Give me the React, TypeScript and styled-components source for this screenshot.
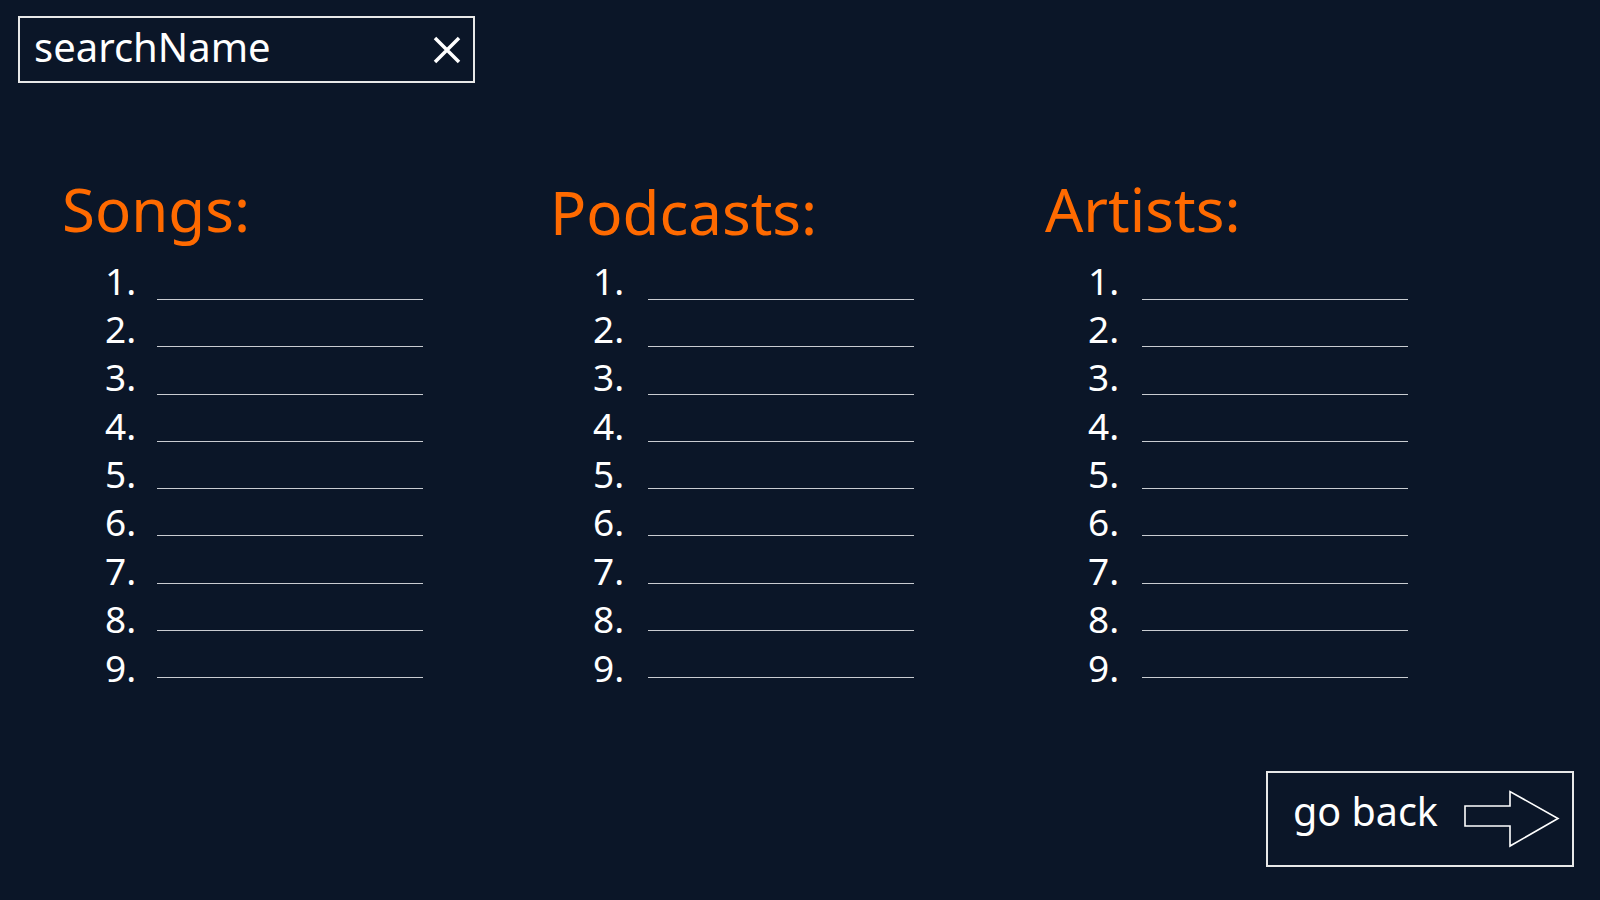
import React from "react";
import styled, { createGlobalStyle } from "styled-components";

const GlobalStyle = createGlobalStyle`
  html, body {
    margin: 0;
    padding: 0;
    background: #0b1628;
  }
  body {
    font-family: "Noto Sans", "Open Sans", sans-serif;
    color: #ffffff;
  }
  * { box-sizing: border-box; }
`;

const Page = styled.div`
  width: 1600px;
  height: 900px;
  display: flex;
  flex-direction: column;
  background: #0b1628;
  overflow: hidden;
`;

const Header = styled.header`
  display: flex;
  padding: 16px 0 0 18px;
`;

const SearchBox = styled.div`
  width: 457px;
  height: 67px;
  border: 2px solid #e8e8e8;
  display: flex;
  align-items: center;
  justify-content: space-between;
  padding: 0 12px 0 14px;
`;

const SearchText = styled.span`
  font-size: 40px;
  line-height: 1;
  color: #ffffff;
  margin-top: -5px;
`;

const ClearIcon = styled.svg`
  width: 28px;
  height: 28px;
  display: block;
`;

const Columns = styled.main`
  display: grid;
  grid-template-columns: 488px 495px 1fr;
  padding: 96px 0 0 62px;
`;

const Column = styled.section`
  display: flex;
  flex-direction: column;
`;

const Heading = styled.h2<{ $offset?: number }>`
  margin: 0 0 12px 0;
  font-size: 60px;
  line-height: 1;
  font-weight: 400;
  color: #ff6a00;
  position: relative;
  top: ${(p) => p.$offset ?? 0}px;
`;

const ListGrid = styled.div<{ $numWidth: number }>`
  display: grid;
  grid-template-columns: ${(p) => p.$numWidth}px 266px;
`;

const Numbers = styled.ol`
  list-style: none;
  margin: 0;
  padding: 5.5px 0 0 43px;
`;

const Num = styled.li`
  font-size: 37px;
  line-height: 48.4px;
  height: 48.4px;
  color: #ffffff;
`;

const Blanks = styled.div`
  display: flex;
  flex-direction: column;
  padding-top: 1.7px;
`;

const Blank = styled.div`
  height: 47.3px;
  border-bottom: 1px solid #c9ccd1;
`;

const Footer = styled.footer`
  margin-top: auto;
  display: flex;
  justify-content: flex-end;
  padding: 0 26px 33px 0;
`;

const BackButton = styled.button`
  width: 308px;
  height: 96px;
  border: 2px solid #e8e8e8;
  background: transparent;
  display: flex;
  align-items: center;
  padding: 0 12px 0 25px;
  font-family: "Noto Sans", "Open Sans", sans-serif;
  color: #ffffff;
  cursor: pointer;
`;

const BackLabel = styled.span`
  font-size: 39.5px;
  line-height: 1;
  margin-top: -15px;
`;

const ArrowIcon = styled.svg`
  width: 96px;
  height: 58px;
  margin-left: auto;
  display: block;
`;

const sections = [
  { title: "Songs:", offset: 0, numWidth: 95 },
  { title: "Podcasts:", offset: 3, numWidth: 98 },
  { title: "Artists:", offset: 0, numWidth: 97 },
];

const nums = [1, 2, 3, 4, 5, 6, 7, 8, 9];

export default function App() {
  return (
    <Page>
      <GlobalStyle />
      <Header>
        <SearchBox>
          <SearchText>searchName</SearchText>
          <ClearIcon viewBox="0 0 28 28" aria-label="clear">
            <path
              d="M2 2 L26 26 M26 2 L2 26"
              stroke="#ffffff"
              strokeWidth="3.5"
              strokeLinecap="butt"
              fill="none"
            />
          </ClearIcon>
        </SearchBox>
      </Header>
      <Columns>
        {sections.map((s) => (
          <Column key={s.title}>
            <Heading $offset={s.offset}>{s.title}</Heading>
            <ListGrid $numWidth={s.numWidth}>
              <Numbers>
                {nums.map((n) => (
                  <Num key={n}>{n}.</Num>
                ))}
              </Numbers>
              <Blanks>
                {nums.map((n) => (
                  <Blank key={n} />
                ))}
              </Blanks>
            </ListGrid>
          </Column>
        ))}
      </Columns>
      <Footer>
        <BackButton>
          <BackLabel>go back</BackLabel>
          <ArrowIcon viewBox="0 0 96 58" aria-hidden="true">
            <polygon
              points="1,16 46,16 46,1.5 94,28.5 46,56 46,36 1,36"
              fill="none"
              stroke="#ffffff"
              strokeWidth="1.6"
              strokeLinejoin="miter"
            />
          </ArrowIcon>
        </BackButton>
      </Footer>
    </Page>
  );
}
